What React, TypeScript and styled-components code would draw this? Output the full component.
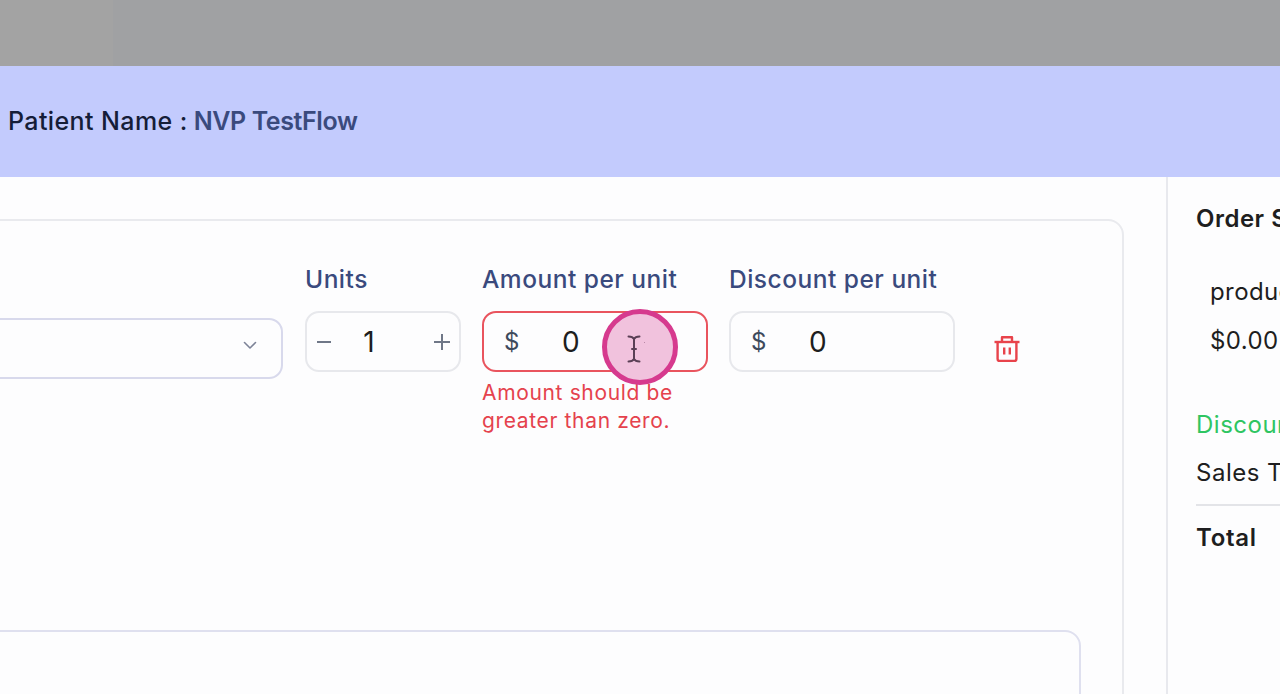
import React from 'react'
import styled, { createGlobalStyle } from 'styled-components'

const GlobalStyle = createGlobalStyle`
	html, body {
		margin: 0;
		padding: 0;
		height: 100%;
		overflow: hidden;
		background: #fdfdfe;
		font-family: 'Inter', 'Liberation Sans', sans-serif;
	}
	* {
		box-sizing: border-box;
	}
`

const Page = styled.div`
	width: 1280px;
	height: 694px;
	display: flex;
	flex-direction: column;
	overflow: hidden;
	position: relative;
`

const TopBar = styled.div`
	height: 66px;
	flex-shrink: 0;
	display: flex;
	background: #a0a1a3;
`

const TopBarEdge = styled.div`
	width: 113px;
	background: #a3a3a3;
`

const PatientBand = styled.div`
	height: 111px;
	flex-shrink: 0;
	display: flex;
	align-items: center;
	padding: 0 0 2px 8px;
	background: #c3cbfd;
	font-size: 25px;
	font-weight: 500;
	letter-spacing: 0.4px;
	color: #151d38;
	white-space: nowrap;
`

const PatientName = styled.span`
	margin-left: 6px;
	font-weight: 600;
	letter-spacing: -0.4px;
	color: #3a4a7d;
`

const Main = styled.div`
	flex: 1;
	display: flex;
	min-height: 0;
`

const FormColumn = styled.div`
	width: 1168px;
	flex-shrink: 0;
	display: flex;
	justify-content: flex-end;
	padding: 42px 42px 0 0;
	border-right: 2px solid #e8e9ee;
	overflow: hidden;
`

const Card = styled.div`
	width: 1400px;
	flex-shrink: 0;
	height: 700px;
	display: flex;
	flex-direction: column;
	align-items: flex-end;
	border: 2px solid #e9eaee;
	border-radius: 16px;
	padding: 43px 0 0;
`

const ItemRow = styled.div`
	height: 366px;
	display: flex;
	align-items: flex-start;
	padding-right: 102px;
`

const Field = styled.div<{ $width: number; $gap?: number }>`
	width: ${(p) => p.$width}px;
	margin-right: ${(p) => p.$gap ?? 21}px;
	flex-shrink: 0;
`

const SelectField = styled.div`
	width: 600px;
	height: 61px;
	margin: 54px 22px 0 0;
	flex-shrink: 0;
	display: flex;
	align-items: center;
	justify-content: flex-end;
	padding: 0 23px 7px 0;
	border: 2px solid #d8d9ec;
	border-radius: 14px;
	color: #7d8397;
`

const Label = styled.div`
	height: 30px;
	line-height: 30px;
	margin-bottom: 17px;
	font-size: 24.5px;
	font-weight: 500;
	letter-spacing: 0.5px;
	color: #3a4a7d;
	white-space: nowrap;
`

const InputBox = styled.div<{ $error?: boolean }>`
	height: 61px;
	display: flex;
	align-items: center;
	border: 2px solid ${(p) => (p.$error ? '#e9545e' : '#e7e8ec')};
	border-radius: 14px;
	background: #fdfdfe;
`

const Currency = styled.span`
	width: 78px;
	padding-left: 20px;
	font-size: 24px;
	color: #3d4a5c;
`

const Value = styled.span`
	font-size: 28px;
	color: #1e1e20;
`

const UnitValue = styled(Value)`
	flex: 1;
	text-align: center;
	margin-right: 28px;
`

const Stepper = styled.span`
	width: 34px;
	display: flex;
	justify-content: center;
	color: #6f7787;
`

const ErrorText = styled.div`
	margin-top: 7px;
	font-size: 21px;
	line-height: 28px;
	letter-spacing: 0.65px;
	color: #e5424d;
	white-space: nowrap;
`

const TrashButton = styled.div`
	width: 26px;
	margin: 71px 0 0 18px;
	color: #e8434b;
	display: flex;
`

const NotesBox = styled.div`
	width: 1357px;
	margin-right: 41px;
	height: 200px;
	flex-shrink: 0;
	border: 2px solid #dfe0ef;
	border-radius: 16px;
`

const Summary = styled.div`
	flex: 1;
	min-width: 0;
	padding: 27px 0 0 28px;
	overflow: hidden;
	white-space: nowrap;
`

const SummaryTitle = styled.div`
	height: 30px;
	line-height: 30px;
	font-size: 24px;
	font-weight: 600;
	letter-spacing: 0.5px;
	color: #1e1e20;
`

const ProductBlock = styled.div`
	padding: 33px 0 0 14px;
	font-size: 24px;
	letter-spacing: 0.4px;
	color: #1e1e20;
`

const ProductLine = styled.div`
	height: 49px;
	line-height: 49px;
`

const SummaryLine = styled.div<{ $color?: string; $top: number }>`
	margin-top: ${(p) => p.$top}px;
	height: 30px;
	line-height: 30px;
	font-size: 24px;
	letter-spacing: 0.5px;
	color: ${(p) => p.$color ?? '#1e1e20'};
`

const Divider = styled.div`
	height: 2px;
	margin-top: 16px;
	background: #e3e4e8;
`

const TotalLine = styled.div`
	margin-top: 17px;
	height: 30px;
	line-height: 30px;
	font-size: 24px;
	font-weight: 600;
	letter-spacing: 0.7px;
	color: #1e1e20;
`

const ClickMarker = styled.div`
	position: absolute;
	left: 602px;
	top: 309px;
	width: 76px;
	height: 76px;
	border-radius: 50%;
	border: 5px solid #d63a8e;
	background: #f1c2dd;
	display: flex;
	align-items: center;
	justify-content: center;
	padding: 4px 12px 0 0;
`

const MarkerDot = styled.span`
	position: absolute;
	left: 37px;
	top: 28px;
	width: 1px;
	height: 1px;
	background: #b98aa8;
`

const Chevron = () => (
	<svg width="16" height="16" viewBox="0 0 16 16" fill="none" stroke="currentColor" strokeWidth="1.6" strokeLinecap="round" strokeLinejoin="round">
		<path d="M2.5 5.5 8 11l5.5-5.5" />
	</svg>
)

const MinusIcon = () => (
	<svg width="16" height="16" viewBox="0 0 16 16" stroke="currentColor" strokeWidth="2">
		<path d="M1 8h14" />
	</svg>
)

const PlusIcon = () => (
	<svg width="18" height="18" viewBox="0 0 18 18" stroke="currentColor" strokeWidth="2">
		<path d="M1 9h16M9 1v16" />
	</svg>
)

const TrashIcon = () => (
	<svg width="26" height="27" viewBox="0 0 26 27" fill="none" stroke="currentColor" strokeWidth="2.4" strokeLinejoin="round">
		<path d="M0.5 7h25" />
		<path d="M8 7V2.2h10V7" />
		<path d="M3.6 7v17a2 2 0 0 0 2 2h14.8a2 2 0 0 0 2-2V7" />
		<path d="M10.2 12.5v7M15.8 12.5v7" />
	</svg>
)

const TextCursor = () => (
	<svg width="14" height="28" viewBox="0 0 14 28" fill="none" stroke="#5a3f55" strokeWidth="2" strokeLinecap="round">
		<path d="M1.5 1.5c2.5 0 4.5.6 5.5 2.5 1-1.9 3-2.5 5.5-2.5" />
		<path d="M7 4v20" />
		<path d="M1.5 26.5c2.5 0 4.5-.6 5.5-2.5 1 1.9 3 2.5 5.5 2.5" />
		<path d="M5 14h4" />
	</svg>
)

const App = () => {
	return (
		<Page>
			<GlobalStyle />
			<TopBar>
				<TopBarEdge />
			</TopBar>
			<PatientBand>
				Patient Name :<PatientName>NVP TestFlow</PatientName>
			</PatientBand>
			<Main>
				<FormColumn>
					<Card>
						<ItemRow>
							<SelectField>
								<Chevron />
							</SelectField>
							<Field $width={156}>
								<Label>Units</Label>
								<InputBox>
									<Stepper>
										<MinusIcon />
									</Stepper>
									<UnitValue>1</UnitValue>
									<Stepper>
										<PlusIcon />
									</Stepper>
								</InputBox>
							</Field>
							<Field $width={226}>
								<Label>Amount per unit</Label>
								<InputBox $error>
									<Currency>$</Currency>
									<Value>0</Value>
								</InputBox>
								<ErrorText>
									Amount should be
									<br />
									greater than zero.
								</ErrorText>
							</Field>
							<Field $width={226} $gap={21}>
								<Label>Discount per unit</Label>
								<InputBox>
									<Currency>$</Currency>
									<Value>0</Value>
								</InputBox>
							</Field>
							<TrashButton>
								<TrashIcon />
							</TrashButton>
						</ItemRow>
						<NotesBox />
					</Card>
				</FormColumn>
				<Summary>
					<SummaryTitle>Order Summary</SummaryTitle>
					<ProductBlock>
						<ProductLine>product</ProductLine>
						<ProductLine>$0.00</ProductLine>
					</ProductBlock>
					<SummaryLine $color="#2fc562" $top={45}>
						Discount
					</SummaryLine>
					<SummaryLine $top={18}>Sales Tax</SummaryLine>
					<Divider />
					<TotalLine>Total</TotalLine>
				</Summary>
			</Main>
			<ClickMarker>
				<MarkerDot />
				<TextCursor />
			</ClickMarker>
		</Page>
	)
}

export default App
